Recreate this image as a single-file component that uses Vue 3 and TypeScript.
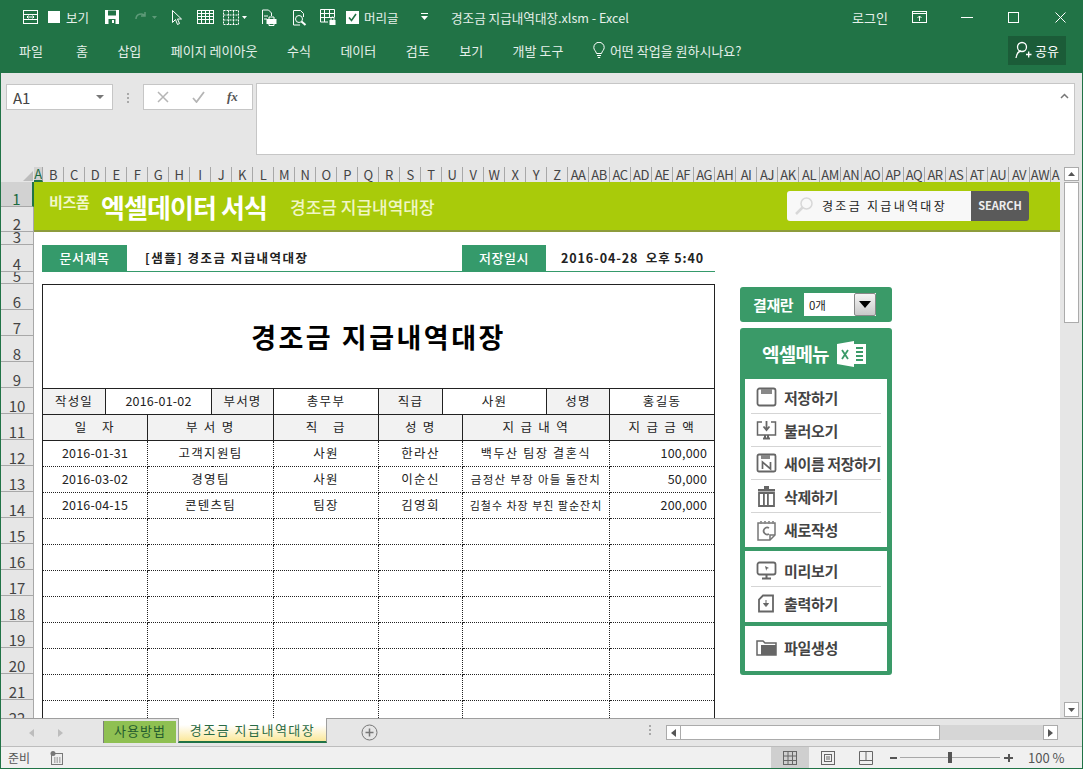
<script setup lang="ts">
const tabs: string[] = ['파일', '홈', '삽입', '페이지 레이아웃', '수식', '데이터', '검토', '보기', '개발 도구']

const letters: string[] = 'BCDEFGHIJKLMNOPQRSTUVWXYZ'.split('')
const second: string[] = 'ABCDEFGHIJKLMNOPQRSTUVW'.split('').map((c) => 'A' + c)
const columns: string[] = [...letters, ...second]

interface RowHead { n: number; h: number }
const rowHeads: RowHead[] = [
  { n: 1, h: 25 }, { n: 2, h: 25 }, { n: 3, h: 13 }, { n: 4, h: 27 }, { n: 5, h: 12 },
  ...Array.from({ length: 17 }, (_, i) => ({ n: i + 6, h: 26 })),
]

const records: string[][] = [
  ['2016-01-31', '고객지원팀', '사원', '한라산', '백두산 팀장 결혼식', '100,000'],
  ['2016-03-02', '경영팀', '사원', '이순신', '금정산 부장 아들 돌잔치', '50,000'],
  ['2016-04-15', '콘텐츠팀', '팀장', '김영희', '김철수 차장 부친 팔순잔치', '200,000'],
]
const detailClass: string[] = ['detail', 'detail small', 'detail tiny']
const blanks: number[] = [1, 2, 3, 4, 5, 6, 7, 8]
</script>

<template>
  <div class="window">
    <header class="titlebar">
      <div class="qat">
        <svg class="q" style="margin-left:22px" width="17" height="16" viewBox="0 0 17 16" fill="none" stroke="#fff"><rect x="1.5" y="1.5" width="14" height="13"/><path d="M1.5 5.5h14M1.5 10.5h14M5 8h7M5 8l1.5-1.5M5 8l1.5 1.5M12 8l-1.5-1.5M12 8l-1.5 1.5"/></svg>
        <span class="check plain"></span>
        <span class="qtext">보기</span>
        <svg style="margin-left:15px" width="16" height="16" viewBox="0 0 16 16"><path d="M1 1h14v14H1z" fill="#fff"/><path d="M4 1.5h8v5H4zM4.5 10h7v5h-7z" fill="#217346"/><rect x="8" y="11" width="2" height="3" fill="#fff"/></svg>
        <svg style="margin-left:14px" width="24" height="14" viewBox="0 0 24 14" fill="none" stroke="#5d9a78" stroke-width="1.5"><path d="M2 9a5 5 0 0 1 9-3M11 2v4H7"/><path d="M18 6h5l-2.500 3z" fill="#5d9a78" stroke="none"/></svg>
        <svg style="margin-left:13px" width="12" height="17" viewBox="0 0 12 17" fill="none" stroke="#fff"><path d="M1.500 1.500v12l3-3 2 5 2-1-2-4.500h4z"/></svg>
        <svg style="margin-left:14px" width="17" height="14" viewBox="0 0 17 14" fill="none" stroke="#fff"><rect x="0.500" y="0.500" width="16" height="13"/><path d="M0.500 3.500h16M0.500 6.500h16M0.500 9.500h16M4.500 0.500v13M8.500 0.500v13M12.500 0.500v13"/></svg>
        <svg style="margin-left:9px" width="24" height="15" viewBox="0 0 24 15" fill="none" stroke="#fff"><rect x="0.500" y="0.500" width="15" height="14" stroke-dasharray="2 1"/><path d="M0.500 5h15M0.500 10h15M5.500 0.500v14M10.500 0.500v14" stroke-dasharray="2 1"/><path d="M19 6h5l-2.500 3z" fill="#fff" stroke="none"/></svg>
        <svg style="margin-left:13px" width="17" height="17" viewBox="0 0 17 17" fill="none" stroke="#fff"><path d="M2.500 15v-14h6l3 3v3"/><path d="M4 7h4M4 10h3"/><rect x="7" y="10.500" width="9" height="4" fill="#fff"/><path d="M9 10V8h5v2M9 15v1.500h5V15" /></svg>
        <svg style="margin-left:14px" width="16" height="17" viewBox="0 0 16 17" fill="none" stroke="#fff"><path d="M9 16H2.500V1.500h7l3 3V8"/><circle cx="8" cy="10" r="3.500"/><path d="M10.500 12.500l4 3.500" stroke-width="2"/></svg>
        <svg style="margin-left:13px" width="16" height="17" viewBox="0 0 16 17" fill="none" stroke="#fff"><path d="M8 13H0.500V0.500h14V8M0.500 4.500h14M0.500 8.500h14M4.500 0.500V13M9.500 0.500v8"/><rect x="9.500" y="11" width="6" height="5" fill="#fff" stroke="none"/><path d="M11 11V9.500a1.500 1.500 0 0 1 3 0V11"/></svg>
        <span class="check ticked"><svg width="11" height="11" viewBox="0 0 11 11" fill="none" stroke="#217346" stroke-width="1.600"><path d="M2 5.500l2.500 3L9 2"/></svg></span>
        <span class="qtext hd">머리글</span>
        <svg style="margin-left:22px" width="7" height="8" viewBox="0 0 7 8" fill="#fff"><rect x="0" y="0" width="7" height="1"/><path d="M0 3h7L3.500 7z"/></svg>
      </div>
      <div class="doc-title">경조금 지급내역대장.xlsm - Excel</div>
      <div class="win-controls">
        <span class="login">로그인</span>
        <svg class="ribbon-opt" width="15" height="12" viewBox="0 0 15 12" fill="none" stroke="#fff"><rect x="0.500" y="0.500" width="14" height="11"/><path d="M0.500 2.500h14M7.500 10V5M5.500 7l2-2 2 2"/></svg>
        <svg class="minimize" width="12" height="10" viewBox="0 0 12 10" stroke="#fff"><path d="M0 5.500h12"/></svg>
        <svg class="maximize" width="11" height="11" viewBox="0 0 11 11" fill="none" stroke="#fff"><rect x="0.500" y="0.500" width="10" height="10"/></svg>
        <svg class="close" width="11" height="11" viewBox="0 0 11 11" fill="none" stroke="#fff"><path d="M0.500 0.500l10 10M10.500 0.500l-10 10"/></svg>
      </div>
    </header>

    <nav class="ribbon">
      <span v-for="t in tabs" :key="t" class="tab">{{ t }}</span>
      <span class="tell">
        <svg width="12" height="17" viewBox="0 0 12 17" fill="none" stroke="#fff"><path d="M3.500 11.500C3 9 .8 8 .8 5.500a5.200 5.200 0 0 1 10.400 0C11.200 8 9 9 8.500 11.500zM4 13.500h4M4.800 15.500h2.400"/></svg>
        어떤 작업을 원하시나요?
      </span>
      <span class="share">
        <svg width="17" height="18" viewBox="0 0 17 18" fill="none" stroke="#fff" stroke-width="1.300"><circle cx="7" cy="6" r="4.500"/><path d="M1 17c.5-4 2.500-6.500 5-7M11 13.500h5.500M13.700 10.500v6"/></svg>
        공유
      </span>
    </nav>

    <section class="formula-area">
      <div class="name-box"><span>A1</span><i class="tri"></i></div>
      <div class="grip"><b></b><b></b><b></b></div>
      <div class="fx-box">
        <svg width="12" height="12" viewBox="0 0 12 12" fill="none" stroke="#b5b5b5" stroke-width="1.500"><path d="M1 1l10 10M11 1L1 11"/></svg>
        <svg width="13" height="12" viewBox="0 0 13 12" fill="none" stroke="#b5b5b5" stroke-width="1.800"><path d="M1 7l3.500 4L12 1"/></svg>
        <span class="fx">fx</span>
      </div>
      <div class="formula-input">
        <svg width="9" height="6" viewBox="0 0 9 6" fill="none" stroke="#777" stroke-width="1.500"><path d="M1 5l3.500-3.500L8 5"/></svg>
      </div>
    </section>

    <div class="col-head">
      <div class="corner"><i></i></div>
      <div class="col sel-col">A</div>
      <div v-for="c in columns" :key="c" class="col">{{ c }}</div>
      <div class="col last-col">A</div>
      <div class="scroll-cap">
        <div class="sb-btn"><svg width="7" height="4" viewBox="0 0 7 4" fill="#555"><path d="M0 4l3.500-4L7 4z"/></svg></div>
      </div>
    </div>

    <main class="sheet-wrap">
      <div class="row-heads">
        <div
          v-for="r in rowHeads"
          :key="r.n"
          class="row-head"
          :class="{ selected: r.n === 1 }"
          :style="{ height: r.h + 'px' }"
        ><span>{{ r.n }}</span></div>
      </div>

      <div class="sheet">
        <div class="banner">
          <span class="brand">비즈폼</span>
          <span class="brand-title">엑셀데이터 서식</span>
          <span class="sub-title">경조금 지급내역대장</span>
          <div class="search">
            <div class="search-field">
              <svg width="20" height="20" viewBox="0 0 20 20" fill="none" stroke="#d8d8d8"><circle cx="12.500" cy="7.500" r="5.500" stroke-width="1.500"/><path d="M8.500 11.500L2 18" stroke-width="2.500"/></svg>
              <span>경조금 지급내역대장</span>
            </div>
            <div class="search-btn">SEARCH</div>
          </div>
        </div>

        <div class="doc-row">
          <span class="doc-label">문서제목</span>
          <span class="doc-name">[샘플] 경조금 지급내역대장</span>
          <span class="doc-label second">저장일시</span>
          <span class="doc-date">2016-04-28&nbsp;&nbsp;오후 5:40</span>
        </div>

        <div class="content">
          <table class="form">
            <colgroup>
              <col style="width:63px" /><col style="width:42px" /><col style="width:64px" /><col style="width:62px" /><col style="width:105px" />
              <col style="width:64px" /><col style="width:20px" /><col style="width:84px" /><col style="width:63px" /><col style="width:105px" />
            </colgroup>
            <tbody>
              <tr class="title-row"><td colspan="10">경조금 지급내역대장</td></tr>
              <tr class="solid">
                <th>작성일</th><td colspan="2">2016-01-02</td><th>부서명</th><td class="ko">총무부</td>
                <th>직급</th><td colspan="2" class="ko">사원</td><th>성명</th><td class="ko">홍길동</td>
              </tr>
              <tr class="solid">
                <th colspan="2" class="wide">일&nbsp;&nbsp;&nbsp;자</th>
                <th colspan="2" class="wide">부 서 명</th>
                <th class="wide">직&nbsp;&nbsp;&nbsp;급</th>
                <th colspan="2" class="wide">성 명</th>
                <th colspan="2" class="wide">지 급 내 역</th>
                <th class="wide">지 급 금 액</th>
              </tr>
              <tr v-for="(r, i) in records" :key="r[0]" class="dotted">
                <td colspan="2">{{ r[0] }}</td>
                <td colspan="2" class="ko">{{ r[1] }}</td>
                <td class="ko">{{ r[2] }}</td>
                <td colspan="2" class="ko">{{ r[3] }}</td>
                <td colspan="2" :class="detailClass[i]">{{ r[4] }}</td>
                <td class="amount">{{ r[5] }}</td>
              </tr>
              <tr v-for="b in blanks" :key="b" class="dotted">
                <td colspan="2"></td><td colspan="2"></td><td></td><td colspan="2"></td><td colspan="2"></td><td></td>
              </tr>
            </tbody>
          </table>

          <aside class="side">
            <div class="approval">
              <span class="approval-label">결재란</span>
              <div class="combo"><span>0개</span><i><svg width="12" height="7" viewBox="0 0 12 7"><path d="M0 0h12L6 7z" fill="#000"/></svg></i></div>
            </div>

            <div class="menu">
              <div class="menu-head">
                <span>엑셀메뉴</span>
                <svg width="29" height="26" viewBox="0 0 29 26">
                  <rect x="9" y="3" width="20" height="20" fill="#fff"/>
                  <path d="M12 7h4M12 11h4M12 15h4M12 19h4M19 7h7M19 11h7M19 15h7M19 19h7" stroke="#3a9a68" stroke-width="2.200"/>
                  <path d="M0 3L17 0v26L0 23z" fill="#fff"/>
                  <path d="M5 9l6 9M11 9l-6 9" stroke="#3a9a68" stroke-width="1.800"/>
                </svg>
              </div>

              <div class="menu-group first">
                <div class="item">
                  <svg width="21" height="20" viewBox="0 0 21 20" fill="none" stroke="#666" stroke-width="1.800"><rect x="1.500" y="1.500" width="18" height="17" rx="2"/><rect x="5" y="2" width="11" height="5" fill="#888" stroke="none"/></svg>
                  <span>저장하기</span>
                </div>
                <div class="item">
                  <svg width="21" height="20" viewBox="0 0 21 20" fill="none" stroke="#666" stroke-width="1.500"><path d="M6 2H1.500v13h18V2H15"/><path d="M10.500 1v8M7.500 6.500l3 3.500 3-3.500" stroke-width="1.800"/><path d="M7 18.500h7M9 15v3M12 15v3" stroke-width="2"/></svg>
                  <span>불러오기</span>
                </div>
                <div class="item">
                  <svg width="21" height="20" viewBox="0 0 21 20" fill="none" stroke="#666" stroke-width="1.800"><rect x="1.500" y="1.500" width="18" height="17" rx="1.500"/><rect x="5" y="2" width="9" height="4" fill="#888" stroke="none"/><path d="M6.500 16V9l8 7V9" stroke-width="1.700"/></svg>
                  <span class="tight">새이름 저장하기</span>
                </div>
                <div class="item">
                  <svg width="21" height="22" viewBox="0 0 21 22" fill="#666"><rect x="2" y="4" width="17" height="2.500"/><rect x="8" y="1" width="5" height="3"/><path d="M3 8h15v13H3z" fill="none" stroke="#666" stroke-width="1.800"/><path d="M7 9v11h1.800V9zM11 9v11h1.800V9z"/></svg>
                  <span>삭제하기</span>
                </div>
                <div class="item">
                  <svg width="21" height="22" viewBox="0 0 21 22" fill="none" stroke="#777" stroke-width="1.500"><path d="M2 4h17v12l-5 5H2z"/><path d="M14 21v-5h5" /><path d="M5 2v3M9 2v3M13 2v3M17 2v3" stroke-dasharray="1.500 1"/><path d="M13 9a3.500 3.500 0 1 0 0 6" stroke-width="1.800"/></svg>
                  <span>새로작성</span>
                </div>
              </div>

              <div class="menu-group">
                <div class="item">
                  <svg width="21" height="19" viewBox="0 0 21 19" fill="none" stroke="#666" stroke-width="1.800"><rect x="1.500" y="1.500" width="18" height="12" rx="2"/><path d="M6 17.500h9M10.500 14v3" stroke-width="2"/><path d="M9 5l4 2-2 .8-.8 2z" fill="#666" stroke="none"/></svg>
                  <span>미리보기</span>
                </div>
                <div class="item">
                  <svg width="21" height="19" viewBox="0 0 21 19" fill="none" stroke="#666" stroke-width="1.800"><path d="M7 1.500h10v16H3V5.500z"/><path d="M10 6v5M7.500 9.500l2.500 3 2.500-3z" fill="#666" stroke-width="1"/></svg>
                  <span>출력하기</span>
                </div>
              </div>

              <div class="menu-group last">
                <div class="item">
                  <svg width="21" height="17" viewBox="0 0 21 17" fill="none" stroke="#666" stroke-width="1.500"><path d="M1 16V2h6l2 2h11v12z"/><path d="M5 16V6h15v10z" fill="#666" stroke="none"/></svg>
                  <span>파일생성</span>
                </div>
              </div>
            </div>
          </aside>
        </div>
      </div>

      <div class="vscroll">
        <div class="vthumb"></div>
        <div class="sb-btn down"><svg width="7" height="4" viewBox="0 0 7 4" fill="#555"><path d="M0 0l3.500 4L7 0z"/></svg></div>
      </div>
    </main>

    <div class="tabbar">
      <div class="nav-arrows">
        <svg width="5" height="8" viewBox="0 0 5 8" fill="#bdbdbd"><path d="M5 0v8L0 4z"/></svg>
        <svg width="5" height="8" viewBox="0 0 5 8" fill="#bdbdbd"><path d="M0 0v8l5-4z"/></svg>
      </div>
      <div class="sheet-tab used">사용방법</div>
      <div class="sheet-tab active">경조금 지급내역대장</div>
      <svg class="add" width="17" height="17" viewBox="0 0 17 17" fill="none" stroke="#777"><circle cx="8.500" cy="8.500" r="7.500"/><path d="M4.500 8.500h8M8.500 4.500v8" stroke-width="1.500"/></svg>
      <div class="grip tab-grip"><b></b><b></b><b></b></div>
      <div class="hscroll">
        <div class="h-btn"><svg width="5" height="8" viewBox="0 0 5 8" fill="#555"><path d="M5 0v8L0 4z"/></svg></div>
        <div class="h-thumb"></div>
        <div class="h-track"></div>
        <div class="h-btn"><svg width="5" height="8" viewBox="0 0 5 8" fill="#555"><path d="M0 0v8l5-4z"/></svg></div>
      </div>
    </div>

    <footer class="status">
      <span class="ready">준비</span>
      <svg class="macro" width="13" height="14" viewBox="0 0 13 14" fill="none" stroke="#777"><rect x="1.500" y="2.500" width="11" height="11" fill="#eee"/><circle cx="3" cy="2.500" r="2.500" fill="#777" stroke="none"/><path d="M4 7h7M4 9h7M4 11h7" stroke-dasharray="1.500 1"/></svg>
      <div class="views">
        <div class="view on"><svg width="14" height="14" viewBox="0 0 14 14" fill="none" stroke="#666"><rect x="0.500" y="0.500" width="13" height="13"/><path d="M0.500 5h13M0.500 9.500h13M5 0.500v13M9.500 0.500v13"/></svg></div>
        <div class="view"><svg width="14" height="14" viewBox="0 0 14 14" fill="none" stroke="#666"><rect x="0.500" y="0.500" width="13" height="13"/><rect x="3.500" y="3.500" width="7" height="7"/><path d="M5 6h4M5 8h4"/></svg></div>
        <div class="view"><svg width="14" height="14" viewBox="0 0 14 14" fill="none" stroke="#666"><path d="M0.500 0.500h13v13H0.500zM0.500 9.500h13M7 0.500v9"/></svg></div>
      </div>
      <div class="zoom">
        <span class="zbtn minus"></span>
        <span class="slider"><i></i></span>
        <span class="zbtn plus"></span>
      </div>
      <span class="percent">100 %</span>
    </footer>
  </div>
</template>

<style>
html, body { margin: 0; padding: 0; background: #fff; }
</style>

<style scoped>
.window {
  width: 1083px;
  height: 769px;
  box-sizing: border-box;
  border: 1px solid #217346;
  border-top: 0;
  display: flex;
  flex-direction: column;
  overflow: hidden;
  font-family: "Noto Sans CJK KR", "Noto Sans", sans-serif;
  color: #222;
  background: #e6e6e6;
}

/* title bar */
.titlebar {
  height: 35px;
  flex: none;
  box-sizing: border-box;
  padding-bottom: 1px;
  background: #217346;
  color: #fff;
  display: flex;
  align-items: center;
  font-size: 13px;
  margin: 0 -1px;
}
.qat { display: flex; align-items: center; width: 451px; flex: none; }
.check { display: inline-flex; align-items: center; justify-content: center; background: #fff; }
.check.plain { width: 12px; height: 12px; margin-left: 9px; }
.check.ticked { width: 13px; height: 13px; margin-left: 10px; }
.qtext { margin-left: 6px; font-size: 12.500px; color: #e7f1eb; }
.qtext.hd { margin-left: 5px; }
.doc-title { font-size: 12.600px; color: #e6f0ea; white-space: nowrap; width: 401px; flex: none; }
.win-controls { display: flex; align-items: center; flex: 1; }
.login { font-size: 13px; color: #e6f0ea; }
.ribbon-opt { margin-left: 24px; }
.minimize { margin-left: 34px; }
.maximize { margin-left: 35px; }
.close { margin-left: 36px; }

/* ribbon */
.ribbon {
  height: 38px;
  flex: none;
  margin: 0 -1px;
  background: #217346;
  color: #e4efe9;
  display: flex;
  align-items: center;
  padding: 0 17px 8px 19px;
  box-sizing: border-box;
  font-size: 13px;
  gap: 29.500px;
}
.tab:first-child { margin-right: 3.500px; }
.tell { display: inline-flex; align-items: center; gap: 5px; }
.share {
  margin-left: auto;
  width: 58px;
  height: 29px;
  background: #1b5c38;
  display: inline-flex;
  align-items: center;
  justify-content: center;
  gap: 3px;
  color: #fff;
}

/* formula */
.formula-area {
  height: 94px;
  flex: none;
  display: flex;
  align-items: flex-start;
  padding: 10px 7px 0 5px;
  box-sizing: border-box;
  background: #e6e6e6;
}
.name-box {
  width: 107px;
  height: 26px;
  margin-top: 1px;
  box-sizing: border-box;
  background: #fff;
  border: 1px solid #c6c6c6;
  display: flex;
  align-items: center;
  justify-content: space-between;
  padding: 0 8px 0 6px;
  font-size: 15px;
  color: #444;
}
.tri { width: 0; height: 0; border: 4px solid transparent; border-top: 4px solid #777; border-bottom: 0; }
.grip { display: flex; flex-direction: column; gap: 2px; width: 30px; align-items: center; margin-top: 10px; }
.grip b { width: 2px; height: 2px; background: #a9a9a9; }
.fx-box {
  width: 110px;
  height: 26px;
  margin-top: 1px;
  box-sizing: border-box;
  background: #fff;
  border: 1px solid #c6c6c6;
  display: flex;
  align-items: center;
  padding-left: 13px;
  gap: 23px;
}
.fx { font-family: "Liberation Serif", serif; font-style: italic; font-weight: 700; font-size: 13px; color: #555; margin-left: -1px; }
.formula-input {
  margin-left: 3px;
  flex: 1;
  height: 72px;
  box-sizing: border-box;
  background: #fff;
  border: 1px solid #c6c6c6;
  display: flex;
  justify-content: flex-end;
  padding: 9px 5px 0 0;
}
.formula-input svg { display: block; }

/* column head */
.col-head {
  height: 15px;
  flex: none;
  display: flex;
  background: #e6e6e6;
  font-size: 13px;
  line-height: 15px;
  color: #444;
  overflow: hidden;
}
.corner { width: 33px; flex: none; }
.corner i {
  display: block;
  width: 0;
  height: 0;
  margin: 4px 0 0 22px;
  border-left: 10px solid transparent;
  border-bottom: 10px solid #bdbdbd;
}
.col {
  width: 21px;
  flex: none;
  box-sizing: border-box;
  border-right: 1px solid #a8a8a8;
  text-align: center;
  letter-spacing: -0.5px;
  white-space: nowrap;
  overflow: hidden;
}
.sel-col { width: 9px; background: #d2d2d2; color: #1d6b41; border-bottom: 2px solid #217346; line-height: 14px; }
.last-col { width: 9px; border-right: 0; }
.scroll-cap { flex: 1; display: flex; justify-content: center; }
.sb-btn {
  width: 15px;
  height: 14px;
  box-sizing: border-box;
  background: #fff;
  border: 1px solid #ababab;
  display: flex;
  align-items: center;
  justify-content: center;
  flex: none;
}
.sb-btn svg { display: block; }

/* sheet */
.sheet-wrap { flex: 1; min-height: 0; display: flex; background: #fff; overflow: hidden; }
.row-heads { width: 33px; flex: none; background: #e6e6e6; }
.row-head {
  box-sizing: border-box;
  border-bottom: 1px solid #a8a8a8;
  border-right: 1px solid #a8a8a8;
  display: flex;
  align-items: flex-end;
  justify-content: center;
  font-size: 15px;
  line-height: 15px;
  color: #444;
  overflow: hidden;
}
.row-head.selected { background: #d2d2d2; color: #1d6b41; border-right: 2px solid #217346; }
.sheet { width: 1026px; flex: none; overflow: hidden; }
.banner {
  height: 50px;
  box-sizing: border-box;
  background: #a9cb0a;
  border-bottom: 2px solid #8d9c3c;
  display: flex;
  align-items: center;
  color: #fff;
  padding-left: 15px;
}
.brand { font-size: 15px; font-weight: 700; margin-top: -10px; width: 52px; flex: none; color: #f1f7c9; letter-spacing: -0.300px; }
.brand-title { font-size: 26px; font-weight: 700; letter-spacing: -0.900px; width: 189px; flex: none; white-space: nowrap; }
.sub-title { font-size: 17px; font-weight: 500; color: #f0f6c5; white-space: nowrap; }
.search { margin-left: auto; margin-right: 31px; display: flex; height: 30px; }
.search-field {
  width: 184px;
  box-sizing: border-box;
  background: #f8f8f8;
  display: flex;
  align-items: center;
  padding: 0 0 1px 7px;
  gap: 8px;
  border-radius: 3px 0 0 3px;
  font-size: 12px;
  letter-spacing: 2.300px;
  color: #222;
  white-space: nowrap;
}
.search-btn {
  width: 58px;
  box-sizing: border-box;
  padding-bottom: 2px;
  background: #5a5a5a;
  color: #eee;
  font-size: 11px;
  font-weight: 700;
  display: flex;
  align-items: center;
  justify-content: center;
  border-radius: 0 3px 3px 0;
}
.doc-row {
  margin: 13px 0 0 8px;
  width: 673px;
  height: 27px;
  box-sizing: border-box;
  border-bottom: 1px solid #359a6b;
  display: flex;
  align-items: stretch;
  font-size: 12.500px;
  font-weight: 700;
  color: #222;
}
.doc-label {
  width: 85px;
  flex: none;
  box-sizing: border-box;
  padding-bottom: 1px;
  background: #359a6b;
  color: #fff;
  font-size: 13px;
  font-weight: 500;
  letter-spacing: 0.500px;
  display: flex;
  align-items: center;
  justify-content: center;
}
.doc-name { margin-left: 18px; width: 317px; flex: none; display: flex; align-items: center; letter-spacing: 1.450px; white-space: nowrap; padding-bottom: 2px; box-sizing: border-box; }
.doc-label.second { width: 84px; }
.doc-date { margin-left: 15px; display: flex; align-items: center; letter-spacing: 0.900px; white-space: nowrap; padding-bottom: 2px; box-sizing: border-box; }

.content { display: flex; align-items: flex-start; margin: 12px 0 0 8px; gap: 25px; }
.form {
  width: 672px;
  flex: none;
  table-layout: fixed;
  border-collapse: collapse;
  font-size: 12.500px;
  letter-spacing: 0.200px;
  color: #222;
  border: 1px solid #222;
}
.form td, .form th {
  height: 26px;
  padding: 0 0 2px;
  box-sizing: border-box;
  text-align: center;
  font-weight: 400;
  white-space: nowrap;
  overflow: hidden;
}
.form th { letter-spacing: 1.200px; }
.form .ko { letter-spacing: 1.300px; }
.form .title-row td { height: 104px; font-size: 27px; font-weight: 700; color: #000; letter-spacing: 2.500px; border-bottom: 1px solid #222; padding-bottom: 0; }
.solid td, .solid th { border: 1px solid #222; }
.solid th { background: #f2f2f2; }
.form .solid th.wide { letter-spacing: 1.800px; }
.dotted td { border-left: 1px dotted #222; border-right: 1px dotted #222; border-bottom: 1px dotted #222; }
.dotted td:first-child { border-left: 1px solid #222; }
.dotted td:last-child { border-right: 1px solid #222; }
.form .detail { font-size: 12px; letter-spacing: 1.700px; }
.form .detail.small { font-size: 11.500px; letter-spacing: 1.300px; }
.form .detail.tiny { font-size: 11px; letter-spacing: 1px; }
.form .amount { text-align: right; padding-right: 7px; }

.side { width: 152px; flex: none; margin-top: 3px; }
.approval {
  height: 35px;
  box-sizing: border-box;
  background: #3a9a68;
  border-radius: 3px;
  display: flex;
  align-items: center;
  padding-left: 13px;
  gap: 11px;
}
.approval-label { color: #fff; font-size: 15px; font-weight: 700; letter-spacing: -0.500px; }
.combo {
  width: 72px;
  height: 23px;
  background: #fff;
  display: flex;
  align-items: center;
  justify-content: space-between;
  box-sizing: border-box;
  padding-left: 5px;
  font-size: 11.500px;
  color: #222;
}
.combo i {
  width: 22px;
  height: 23px;
  background: linear-gradient(#f5f5f5, #c9c9c9);
  border: 1px solid #888;
  box-sizing: border-box;
  display: flex;
  align-items: center;
  justify-content: center;
  border-radius: 2px;
}
.menu {
  margin-top: 6px;
  height: 347px;
  box-sizing: border-box;
  background: #3a9a68;
  border-radius: 3px;
  padding: 0 5px 4px;
  display: flex;
  flex-direction: column;
}
.menu-head {
  height: 51px;
  flex: none;
  display: flex;
  align-items: center;
  color: #fff;
  font-size: 19px;
  font-weight: 700;
  letter-spacing: -0.800px;
  padding-left: 17px;
  gap: 8px;
}
.menu-group { background: #fff; padding: 3px 6px; display: flex; flex-direction: column; height: 71px; box-sizing: border-box; margin-bottom: 4px; }
.menu-group.first { height: 168px; padding-top: 2px; }
.menu-group.last { height: 45px; margin-bottom: 0; justify-content: center; padding-bottom: 5px; }
.item {
  height: 33px;
  flex: none;
  box-sizing: border-box;
  display: flex;
  align-items: center;
  gap: 7px;
  padding-left: 5px;
  border-bottom: 1px solid #d5d5d5;
  font-size: 15px;
  font-weight: 700;
  color: #444;
  letter-spacing: -0.300px;
  white-space: nowrap;
}
.item:last-child { border-bottom: 0; }
.item svg { flex: none; }
.tight { letter-spacing: -0.400px; }

.vscroll {
  flex: 1;
  background: #e6e6e6;
  display: flex;
  flex-direction: column;
  align-items: center;
}
.vthumb { width: 15px; height: 141px; box-sizing: border-box; background: #fff; border: 1px solid #ababab; }
.sb-btn.down { margin-top: auto; margin-bottom: 1px; height: 15px; }

/* tab bar */
.tabbar {
  height: 28px;
  flex: none;
  box-sizing: border-box;
  border-top: 1px solid #9e9e9e;
  background: #e6e6e6;
  display: flex;
  align-items: flex-start;
  font-size: 13px;
}
.nav-arrows { width: 102px; flex: none; display: flex; padding: 10px 0 0 28px; box-sizing: border-box; gap: 24px; }
.sheet-tab { display: flex; align-items: center; justify-content: center; white-space: nowrap; box-sizing: border-box; flex: none; }
.used { width: 73px; height: 22px; margin-top: 2px; padding-bottom: 3px; background: #8fc052; color: #235b2e; letter-spacing: 1px; border-left: 1px solid #7d7d7d; }
.active {
  width: 149px;
  height: 25px;
  margin: -1px 0 0 2px;
  background: linear-gradient(#fff 30%, #fbe89a);
  border-bottom: 2px solid #217346;
  border-left: 1px solid #9e9e9e;
  border-right: 1px solid #9e9e9e;
  color: #2b6b45;
  letter-spacing: 1.500px;
}
.add { margin: 5px 0 0 34px; flex: none; }
.tab-grip { margin: 6px 0 0 269px; width: 6px; flex: none; }
.hscroll { display: flex; margin: 6px 0 0 13px; height: 15px; flex: none; }
.h-btn {
  width: 15px;
  box-sizing: border-box;
  border: 1px solid #ababab;
  background: #fff;
  display: flex;
  align-items: center;
  justify-content: center;
}
.h-thumb { width: 259px; box-sizing: border-box; background: #fff; border: 1px solid #ababab; border-left: 0; }
.h-track { width: 103px; background: #d6d6d6; }

/* status */
.status {
  height: 22px;
  flex: none;
  box-sizing: border-box;
  background: #f0f0f0;
  border-top: 1px solid #bdbdbd;
  display: flex;
  align-items: center;
  font-size: 12px;
  color: #555;
}
.ready { margin-left: 7px; width: 42px; }
.macro { flex: none; }
.views { display: flex; margin-left: 708px; align-self: stretch; }
.view { width: 38px; display: flex; align-items: center; justify-content: center; }
.view.on { background: #cfcfcf; }
.zoom { display: flex; align-items: center; margin-left: 5px; }
.zbtn { width: 7px; height: 2px; background: #555; position: relative; display: block; flex: none; }
.plus { width: 9px; }
.plus::after { content: ""; position: absolute; left: 3.500px; top: -3px; width: 2px; height: 8px; background: #555; }
.slider { width: 100px; height: 1px; background: #a8a8a8; margin: 0 4px 0 3px; display: flex; justify-content: center; align-items: center; }
.slider i { width: 4px; height: 11px; background: #555; display: block; }
.percent { margin-left: 15px; font-size: 13px; white-space: nowrap; }
</style>
